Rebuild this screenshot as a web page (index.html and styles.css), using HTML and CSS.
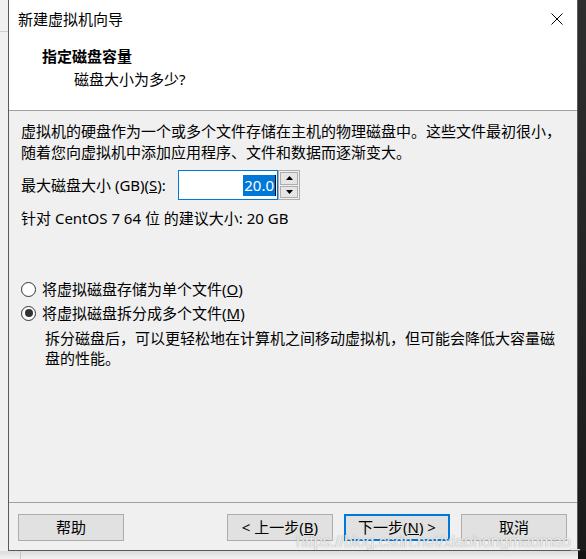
FILE: index.html
```html
<!DOCTYPE html>
<html lang="zh-CN">
<head>
<meta charset="utf-8">
<title>新建虚拟机向导</title>
<link rel="stylesheet" href="styles.css">
</head>
<body>
<div class="screen">
  <div class="left-strip"><div class="strip-line"></div></div>
  <div class="window">
    <div class="top">
      <div class="titlebar">
        <span class="title">新建虚拟机向导</span>
        <svg class="close" width="12" height="12" viewBox="0 0 12 12"><path d="M0.5 0.5 L11.5 11.5 M11.5 0.5 L0.5 11.5" stroke="#000" stroke-width="1" fill="none"/></svg>
      </div>
      <div class="head-title">指定磁盘容量</div>
      <div class="head-sub">磁盘大小为多少?</div>
    </div>
    <div class="body">
      <p class="intro">虚拟机的硬盘作为一个或多个文件存储在主机的物理磁盘中。这些文件最初很小，随着您向虚拟机中添加应用程序、文件和数据而逐渐变大。</p>
      <div class="field">
        <span class="field-label">最大磁盘大小 (GB)(<u>S</u>):</span>
        <div class="input"><span class="sel">20.0</span><span class="caret"></span></div>
        <div class="spin">
          <div class="spin-btn"><svg width="7" height="4" viewBox="0 0 7 4"><path d="M3.5 0 L7 4 L0 4 Z" fill="#000"/></svg></div>
          <div class="spin-btn"><svg width="7" height="4" viewBox="0 0 7 4"><path d="M0 0 L7 0 L3.5 4 Z" fill="#000"/></svg></div>
        </div>
      </div>
      <p class="rec">针对 CentOS 7 64 位 的建议大小: 20 GB</p>
      <div class="radio-row first"><span class="radio"></span><span>将虚拟磁盘存储为单个文件(<u>O</u>)</span></div>
      <div class="radio-row"><span class="radio checked"></span><span>将虚拟磁盘拆分成多个文件(<u>M</u>)</span></div>
      <p class="desc">拆分磁盘后，可以更轻松地在计算机之间移动虚拟机，但可能会降低大容量磁盘的性能。</p>
    </div>
    <div class="footer">
      <button class="btn">帮助</button>
      <div class="spacer"></div>
      <button class="btn">&lt; 上一步(<u>B</u>)</button>
      <button class="btn default">下一步(<u>N</u>) &gt;</button>
      <button class="btn">取消</button>
    </div>
    <div class="watermark">https://blog.csdn.net/xiaohongmaomao_</div>
  </div>
  <div class="right-strip"></div>
</div>
<div class="below"><div class="below-line"></div><div class="below-dark"></div></div>
</body>
</html>
```

FILE: styles.css
```css
html, body {
  margin: 0;
  padding: 0;
}
body {
  background: #f0f0f0;
  font-family: "Noto Sans", "Noto Sans CJK SC", sans-serif;
  font-size: 15px;
  color: #000;
  width: 586px;
  height: 559px;
  overflow: hidden;
}
.screen {
  display: flex;
  height: 551px;
}
.left-strip {
  width: 8px;
  background: #f0f0f0;
  padding-top: 31px;
  box-sizing: border-box;
}
.strip-line {
  height: 1px;
  background: #cfcfcf;
}
.right-strip {
  width: 8px;
  background: linear-gradient(#2e2e2e, #1a1a1a);
}
.window {
  position: relative;
  width: 570px;
  box-sizing: border-box;
  border-left: 1px solid #5a5a5a;
  border-right: 1px solid #5a5a5a;
  border-bottom: 1px solid #5a5a5a;
  background: #f0f0f0;
  display: flex;
  flex-direction: column;
}
.top {
  background: #fff;
  height: 111px;
  box-sizing: border-box;
  border-bottom: 1px solid #a0a0a0;
}
.titlebar {
  height: 38px;
  display: flex;
  align-items: center;
  justify-content: space-between;
  padding: 0 14px 0 9px;
}
.title {
  line-height: 20px;
}
.close {
  display: block;
}
.head-title {
  font-weight: bold;
  line-height: 21px;
  padding: 8px 0 0 33px;
}
.head-sub {
  line-height: 21px;
  padding: 2px 0 0 65px;
}
.body {
  height: 391px;
  box-sizing: border-box;
  padding: 10px 12px 0 12px;
}
.intro {
  margin: 0;
  line-height: 21px;
}
.field {
  display: flex;
  align-items: center;
  margin-top: 7px;
  height: 30px;
}
.field-label {
  width: 157px;
  line-height: 21px;
  white-space: nowrap;
}
.input {
  width: 100px;
  height: 30px;
  box-sizing: border-box;
  border: 1px solid #0078d7;
  background: #fff;
  display: flex;
  align-items: center;
  justify-content: flex-end;
  padding-right: 1px;
}
.sel {
  background: #0078d7;
  color: #fff;
  line-height: 21px;
  padding: 0 1px;
}
.caret {
  width: 1px;
  height: 21px;
  background: #000;
}
.spin {
  width: 22px;
  height: 30px;
  box-sizing: border-box;
  border: 1px solid #adadad;
  background: #f0f0f0;
  display: flex;
  flex-direction: column;
  padding: 1px;
  gap: 1px;
}
.spin-btn {
  flex: 1;
  border: 1px solid #adadad;
  background: #e5e5e5;
  display: flex;
  align-items: center;
  justify-content: center;
}
.spin-btn svg {
  display: block;
}
.rec {
  margin: 8px 0 0 0;
  line-height: 21px;
}
.radio-row {
  display: flex;
  align-items: center;
  height: 24px;
  line-height: 24px;
  margin-top: 0;
}
.radio-row.first {
  margin-top: 48px;
}
.radio {
  width: 15px;
  height: 15px;
  box-sizing: border-box;
  border: 1px solid #333;
  border-radius: 50%;
  background: #fff;
  margin-right: 6px;
  display: flex;
  align-items: center;
  justify-content: center;
}
.radio.checked::after {
  content: "";
  width: 8px;
  height: 8px;
  border-radius: 50%;
  background: #333;
}
.desc {
  margin: 3px 0 0 24px;
  line-height: 20px;
}
.footer {
  border-top: 1px solid #a0a0a0;
  display: flex;
  align-items: flex-start;
  padding: 11px 10px 9px 9px;
  gap: 11px;
}
.spacer {
  flex: 1;
}
.btn {
  width: 106px;
  height: 27px;
  box-sizing: border-box;
  border: 1px solid #adadad;
  background: #e1e1e1;
  font-family: inherit;
  font-size: 15px;
  color: #000;
  padding: 0;
  line-height: 21px;
}
.btn.default {
  border: 2px solid #0078d7;
}
.watermark {
  position: absolute;
  left: 287px;
  top: 532px;
  font-family: "Liberation Sans", Arial, sans-serif;
  font-size: 16px;
  line-height: 20px;
  color: rgba(255, 255, 255, 0.85);
  text-shadow: 0 0 1px rgba(90, 90, 90, 0.7);
  white-space: nowrap;
  pointer-events: none;
}
.below {
  display: flex;
  height: 8px;
  background: linear-gradient(#dcdcdc, #f2f2f2);
}
.below-line {
  width: 20px;
  border-right: 1px solid #c8c8c8;
}
.below-dark {
  margin-left: auto;
  width: 8px;
  background: #111;
}
```
